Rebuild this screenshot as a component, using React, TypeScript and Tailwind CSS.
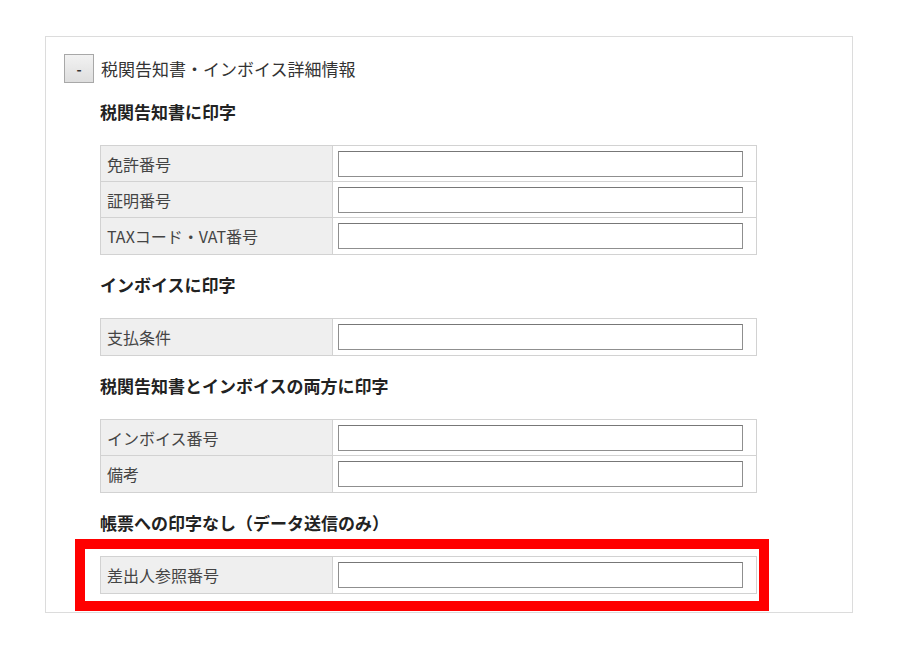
import React from "react";

const font = { fontFamily: '"Noto Sans CJK JP", "Noto Sans", sans-serif' };

function Row({ label, last }: { label: string; last?: boolean }) {
  return (
    <div className={`flex h-[36px] ${last ? "" : "border-b border-[#d2d2d2]"}`}>
      <div className="w-[232px] shrink-0 bg-[#efefef] border-r border-[#d2d2d2] flex items-center pl-[6px] text-[16px] text-[#444]">
        {label}
      </div>
      <div className="flex-1 flex items-center pl-[5px] pr-[13px] bg-white">
        <div className="h-[26px] w-full border border-[#8f8f8f] border-t-[#777] bg-white" />
      </div>
    </div>
  );
}

function Table({ rows }: { rows: string[] }) {
  return (
    <div className="w-[657px] border border-[#d2d2d2]">
      {rows.map((r, i) => (
        <Row key={r} label={r} last={i === rows.length - 1} />
      ))}
    </div>
  );
}

function Heading({ children, first }: { children: React.ReactNode; first?: boolean }) {
  return (
    <div className={`${first ? "mt-[17px]" : "mt-[18px]"} mb-[21px] h-[24px] leading-[24px] text-[17px] font-bold text-[#222]`}>
      {children}
    </div>
  );
}

export default function App() {
  return (
    <div className="w-[900px] h-[645px] bg-white overflow-hidden" style={font}>
      <div className="ml-[45px] mt-[36px] w-[808px] h-[577px] border border-[#dcdcdc] pl-[18px] pt-[17px]">
        <div className="flex items-center h-[29px]">
          <div className="w-[30px] h-[29px] border border-[#a8a8a8] bg-gradient-to-b from-[#f2f2f2] to-[#dedede] flex items-center justify-center text-[14px] font-bold text-[#333] leading-none">
            -
          </div>
          <div className="ml-[7px] text-[17px] text-[#333]">税関告知書・インボイス詳細情報</div>
        </div>
        <div className="ml-[36px]">
          <Heading first>税関告知書に印字</Heading>
          <Table rows={["免許番号", "証明番号", "TAXコード・VAT番号"]} />
          <Heading>インボイスに印字</Heading>
          <Table rows={["支払条件"]} />
          <Heading>税関告知書とインボイスの両方に印字</Heading>
          <Table rows={["インボイス番号", "備考"]} />
          <Heading>帳票への印字なし（データ送信のみ）</Heading>
          <div className="relative">
            <Table rows={["差出人参照番号"]} />
            <div className="absolute left-[-25px] top-[-17px] w-[694px] h-[72px] border-[10px] border-[#ff0000]" />
          </div>
        </div>
      </div>
    </div>
  );
}
